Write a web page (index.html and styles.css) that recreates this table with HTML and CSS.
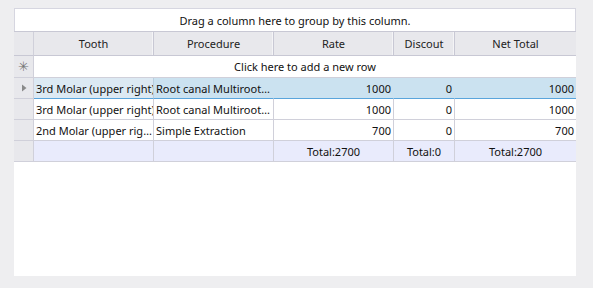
FILE: index.html
```html
<!DOCTYPE html>
<html>
<head>
<meta charset="utf-8">
<link rel="stylesheet" href="styles.css">
</head>
<body>
<div class="panel">
  <div class="group">Drag a column here to group by this column.</div>
  <div class="grid">
    <div class="row head">
      <div class="ind"></div>
      <div class="c">Tooth</div>
      <div class="c">Procedure</div>
      <div class="c">Rate</div>
      <div class="c">Discout</div>
      <div class="c last">Net Total</div>
    </div>
    <div class="row newrow">
      <div class="ind"><span class="star">✳</span></div>
      <div class="newtext">Click here to add a new row</div>
    </div>
    <div class="row data sel">
      <div class="ind"><svg width="6" height="8" viewBox="0 0 6 8"><path d="M1 0.5 L5.5 4 L1 7.5 Z" fill="#8a8a8a"/></svg></div>
      <div class="c l focus">3rd Molar (upper right)</div>
      <div class="c l">Root canal Multiroot…</div>
      <div class="c r">1000</div>
      <div class="c r">0</div>
      <div class="c r last">1000</div>
    </div>
    <div class="row data">
      <div class="ind"></div>
      <div class="c l">3rd Molar (upper right)</div>
      <div class="c l">Root canal Multiroot…</div>
      <div class="c r">1000</div>
      <div class="c r">0</div>
      <div class="c r last">1000</div>
    </div>
    <div class="row data">
      <div class="ind"></div>
      <div class="c l">2nd Molar (upper rig…</div>
      <div class="c l">Simple Extraction</div>
      <div class="c r">700</div>
      <div class="c r">0</div>
      <div class="c r last">700</div>
    </div>
    <div class="row foot">
      <div class="ind"></div>
      <div class="c"></div>
      <div class="c"></div>
      <div class="c">Total:2700</div>
      <div class="c">Total:0</div>
      <div class="c last">Total:2700</div>
    </div>
  </div>
</div>
</body>
</html>
```
FILE: styles.css
```css
html, body {
  margin: 0;
  padding: 0;
  background: #eeeef0;
}
body {
  padding: 8px 17px 12px 14px;
  font-family: "Noto Sans", "DejaVu Sans", sans-serif;
  font-size: 11px;
  color: #111111;
}
.panel {
  background: #ffffff;
  height: 268px;
  display: flex;
  flex-direction: column;
}
.group {
  border: 1px solid #d6d6e0;
  border-bottom: none;
  display: flex;
  align-items: center;
  justify-content: center;
  box-sizing: border-box;
  height: 23px;
  padding-top: 1px;
}
.grid {
  display: flex;
  flex-direction: column;
}
.row {
  display: grid;
  grid-template-columns: 20px 120px 120px 120px 61px 1fr;
  box-sizing: border-box;
}
.ind {
  background: #e8e8ec;
  border-right: 1px solid #d0d0da;
  border-bottom: 1px solid #d0d0da;
  display: flex;
  align-items: center;
  justify-content: center;
  box-sizing: border-box;
}
.c {
  box-sizing: border-box;
  border-right: 1px solid #d0d0da;
  border-bottom: 1px solid #d0d0da;
  display: flex;
  align-items: center;
  justify-content: center;
  white-space: nowrap;
  overflow: hidden;
}
.c.last { border-right: none; }
.head {
  height: 25px;
  background: #e8e8ec;
  border-top: 1px solid #c8c8d4;
}
.head .c {
  background: #e8e8ec;
  border-right: 1px solid #c8c8d4;
  box-shadow: inset -1px 0 0 #f4f4f6;
  border-bottom: 1px solid #c8c8d4;
  color: #222222;
}
.head .c.last { border-right: none; box-shadow: none; }
.head .ind { border-bottom: 1px solid #c8c8d4; }
.newrow {
  height: 22px;
  grid-template-columns: 20px 1fr;
}
.newtext {
  border-bottom: 1px solid #d0d0da;
  display: flex;
  align-items: center;
  justify-content: center;
}
.star {
  color: #767676;
  font-size: 13px;
  line-height: 1;
}
.data { height: 21px; }
.c.l { justify-content: flex-start; padding-left: 2px; }
.c.r { justify-content: flex-end; padding-right: 2px; }
.sel .c {
  background: #cbe2f0;
  border-bottom: 1px solid #5aa5dc;
  border-right-color: #cbe2f0;
}
.sel .c.focus {
  background: #dce9f3;
  border-right-color: #b9cfdf;
}
.foot { height: 21px; }
.foot .c { background: #e9ebfc; }
```
